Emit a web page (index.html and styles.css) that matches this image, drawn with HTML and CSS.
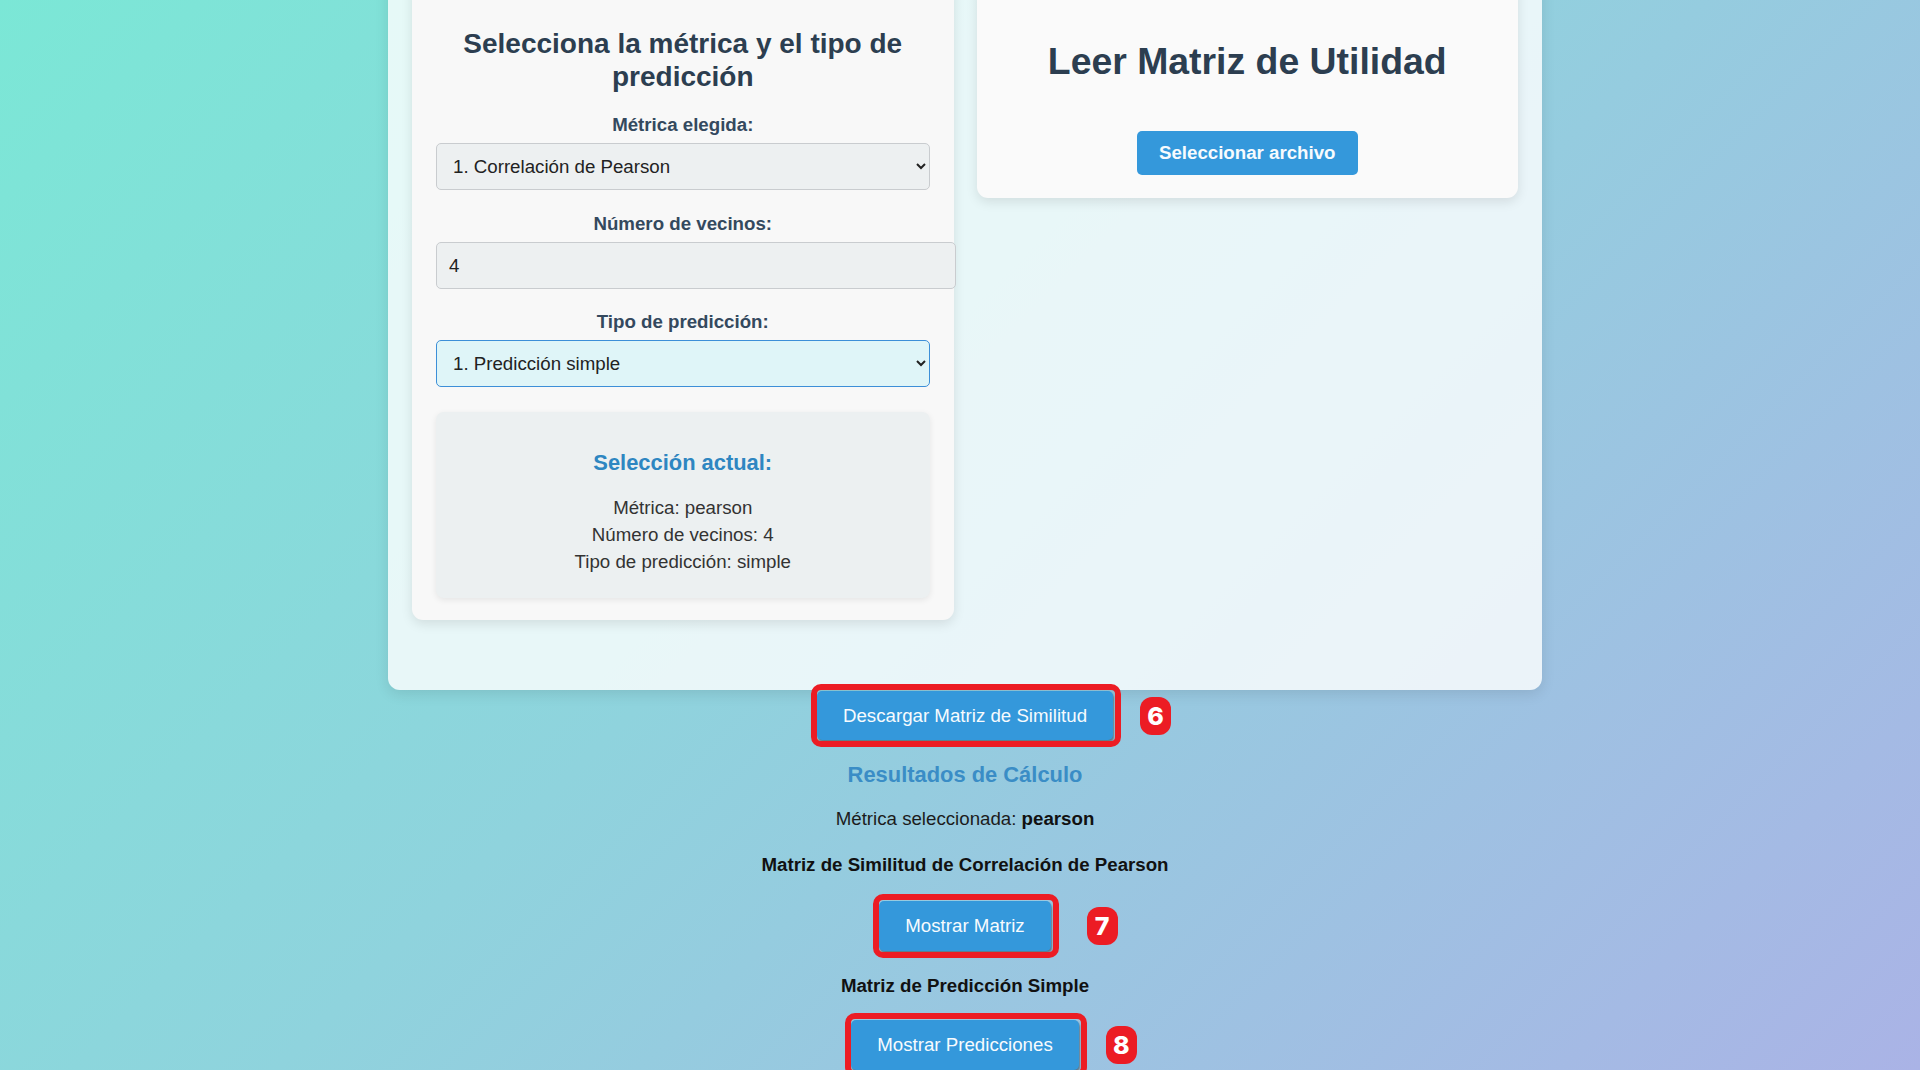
FILE: index.html
```html
<!DOCTYPE html>
<html lang="es">
<head>
<meta charset="utf-8">
<title>Sistema de Recomendación</title>
<link rel="stylesheet" href="styles.css">
</head>
<body>
<div class="page">
  <div class="main">
    <div class="grid">
      <section class="card card-left">
        <h2 class="card-title">Selecciona la métrica y el tipo de predicción</h2>
        <label class="field-label" for="metrica">Métrica elegida:</label>
        <select id="metrica" class="control">
          <option>1. Correlación de Pearson</option>
          <option>2. Distancia coseno</option>
          <option>3. Distancia euclídea</option>
        </select>
        <label class="field-label" for="vecinos">Número de vecinos:</label>
        <input id="vecinos" class="control input" type="number" value="4">
        <label class="field-label" for="tipo">Tipo de predicción:</label>
        <select id="tipo" class="control focused">
          <option>1. Predicción simple</option>
          <option>2. Diferencia con la media</option>
        </select>
        <div class="current">
          <h3 class="current-title">Selección actual:</h3>
          <p class="current-line">Métrica: pearson</p>
          <p class="current-line">Número de vecinos: 4</p>
          <p class="current-line">Tipo de predicción: simple</p>
        </div>
      </section>
      <section class="card card-right">
        <h1 class="file-title">Leer Matriz de Utilidad</h1>
        <div class="file-row">
          <span class="file-btn">Seleccionar archivo</span>
        </div>
      </section>
    </div>
  </div>

  <div class="results">
    <div class="btn-row row-first">
      <div class="hl">
        <button class="btn">Descargar Matriz de Similitud</button>
        <span class="badge">6</span>
      </div>
    </div>
    <h3 class="results-title">Resultados de Cálculo</h3>
    <p class="results-line">Métrica seleccionada: <strong>pearson</strong></p>
    <h4 class="results-sub">Matriz de Similitud de Correlación de Pearson</h4>
    <div class="btn-row row-mid">
      <div class="hl">
        <button class="btn btn-tall">Mostrar Matriz</button>
        <span class="badge badge-wide">7</span>
      </div>
    </div>
    <h4 class="results-sub">Matriz de Predicción Simple</h4>
    <div class="btn-row row-last">
      <div class="hl">
        <button class="btn btn-tall">Mostrar Predicciones</button>
        <span class="badge">8</span>
      </div>
    </div>
  </div>
</div>
</body>
</html>
```

FILE: styles.css
```css
html, body {
  margin: 0;
  padding: 0;
  background: #ffffff;
}

body {
  font-family: "Liberation Sans", Arial, sans-serif;
  font-size: 18.7px;
  color: #222;
}

.page {
  display: flow-root;
  padding-left: 10px;
  background: linear-gradient(135deg, #7be7d6 0%, #8fd3dd 45%, #aab3e6 100%);
}

.main {
  width: 1154px;
  box-sizing: border-box;
  margin: -44px auto 0;
  padding: 24px 24px 70px;
  background: rgba(255, 255, 255, 0.8);
  border-radius: 12px;
  box-shadow: 0 4px 14px rgba(0, 0, 0, 0.1);
}

.grid {
  display: grid;
  grid-template-columns: 1fr 1fr;
  column-gap: 23px;
  align-items: start;
}

.card {
  background: #f8f8f8;
  border-radius: 11px;
  box-shadow: 0 4px 12px rgba(0, 0, 0, 0.1);
  box-sizing: border-box;
}

.card-left {
  padding: 24px 24px 22px;
}

.card-right {
  padding: 24px 24px 23px;
  text-align: center;
  background: #fafafa;
}

.card-title {
  margin: 23px 0 21px;
  font-size: 28px;
  line-height: 33px;
  font-weight: bold;
  color: #2c3e50;
  text-align: center;
}

.field-label {
  display: block;
  margin: 0 0 7px;
  font-weight: bold;
  line-height: 22px;
  color: #34495e;
  text-align: center;
}

.control {
  display: block;
  height: 47px;
  margin: 0 0 23px;
  font-family: "Liberation Sans", Arial, sans-serif;
  font-size: 18.7px;
  color: #222;
  background-color: #edf0f1;
  border: 1px solid #c9cccf;
  border-radius: 5px;
}

select.control {
  width: 100%;
  box-sizing: border-box;
  padding: 0 12px;
}

.input {
  width: 100%;
  box-sizing: content-box;
  height: 45px;
  padding: 0 12px;
  margin-bottom: 22px;
}

.focused {
  background-color: #dff5f8;
  border-color: #3d8fd8;
  margin-bottom: 0;
}

.current {
  margin-top: 25px;
  padding: 20px 20px 23px;
  background: #ecf0f1;
  border-radius: 8px;
  box-shadow: 0 2px 6px rgba(0, 0, 0, 0.08);
  text-align: center;
}

.current-title {
  margin: 18px 0 19px;
  font-size: 21.9px;
  line-height: 25px;
  color: #2e86c1;
}

.current-line {
  margin: 0;
  line-height: 27px;
  color: #333;
}

.file-title {
  margin: 36px 0 48px;
  font-size: 37.4px;
  line-height: 43px;
  font-weight: bold;
  color: #2c3e50;
}

.file-row {
  display: flex;
  justify-content: center;
}

.file-btn {
  display: block;
  height: 44px;
  line-height: 44px;
  padding: 0 22px;
  background: #3498db;
  color: #f7fbfe;
  font-weight: bold;
  border-radius: 5px;
}

.results {
  text-align: center;
}

.btn-row {
  display: flex;
  justify-content: center;
}

.row-first {
  margin-top: 1px;
}

.hl {
  position: relative;
}

.hl::before {
  content: "";
  position: absolute;
  top: -7px;
  right: -8px;
  bottom: -7px;
  left: -6px;
  border: 6px solid #ec1c24;
  border-radius: 10px;
  pointer-events: none;
}

.btn {
  display: block;
  height: 49px;
  padding: 0 26px;
  font-family: "Liberation Sans", Arial, sans-serif;
  font-size: 18.7px;
  line-height: 49px;
  color: #f7fbfe;
  background: #3498db;
  border: none;
  border-radius: 5px;
  box-shadow: 1px 2px 2px rgba(0, 0, 0, 0.4);
}

.btn-tall {
  height: 50px;
  line-height: 50px;
}

.badge {
  position: absolute;
  left: calc(100% + 27px);
  top: 50%;
  transform: translateY(-50%);
  width: 31px;
  height: 38px;
  line-height: 38px;
  border-radius: 12px;
  background: #ec1c24;
  color: #ffffff;
  font-family: "Inter", "Noto Sans", sans-serif;
  font-weight: 800;
  font-size: 25px;
  text-align: center;
}

.badge-wide {
  left: calc(100% + 36px);
}

.results-title {
  margin: 22px 0 21px;
  font-size: 21.9px;
  line-height: 25px;
  color: #3a8dc6;
}

.results-line {
  margin: 0;
  line-height: 22px;
  color: #1c1c1c;
}

.results-line strong {
  color: #111;
}

.results-sub {
  margin: 24px 0 25px;
  font-size: 18.7px;
  line-height: 22px;
  color: #111;
}

.row-last {
  margin-top: -2px;
}
```
